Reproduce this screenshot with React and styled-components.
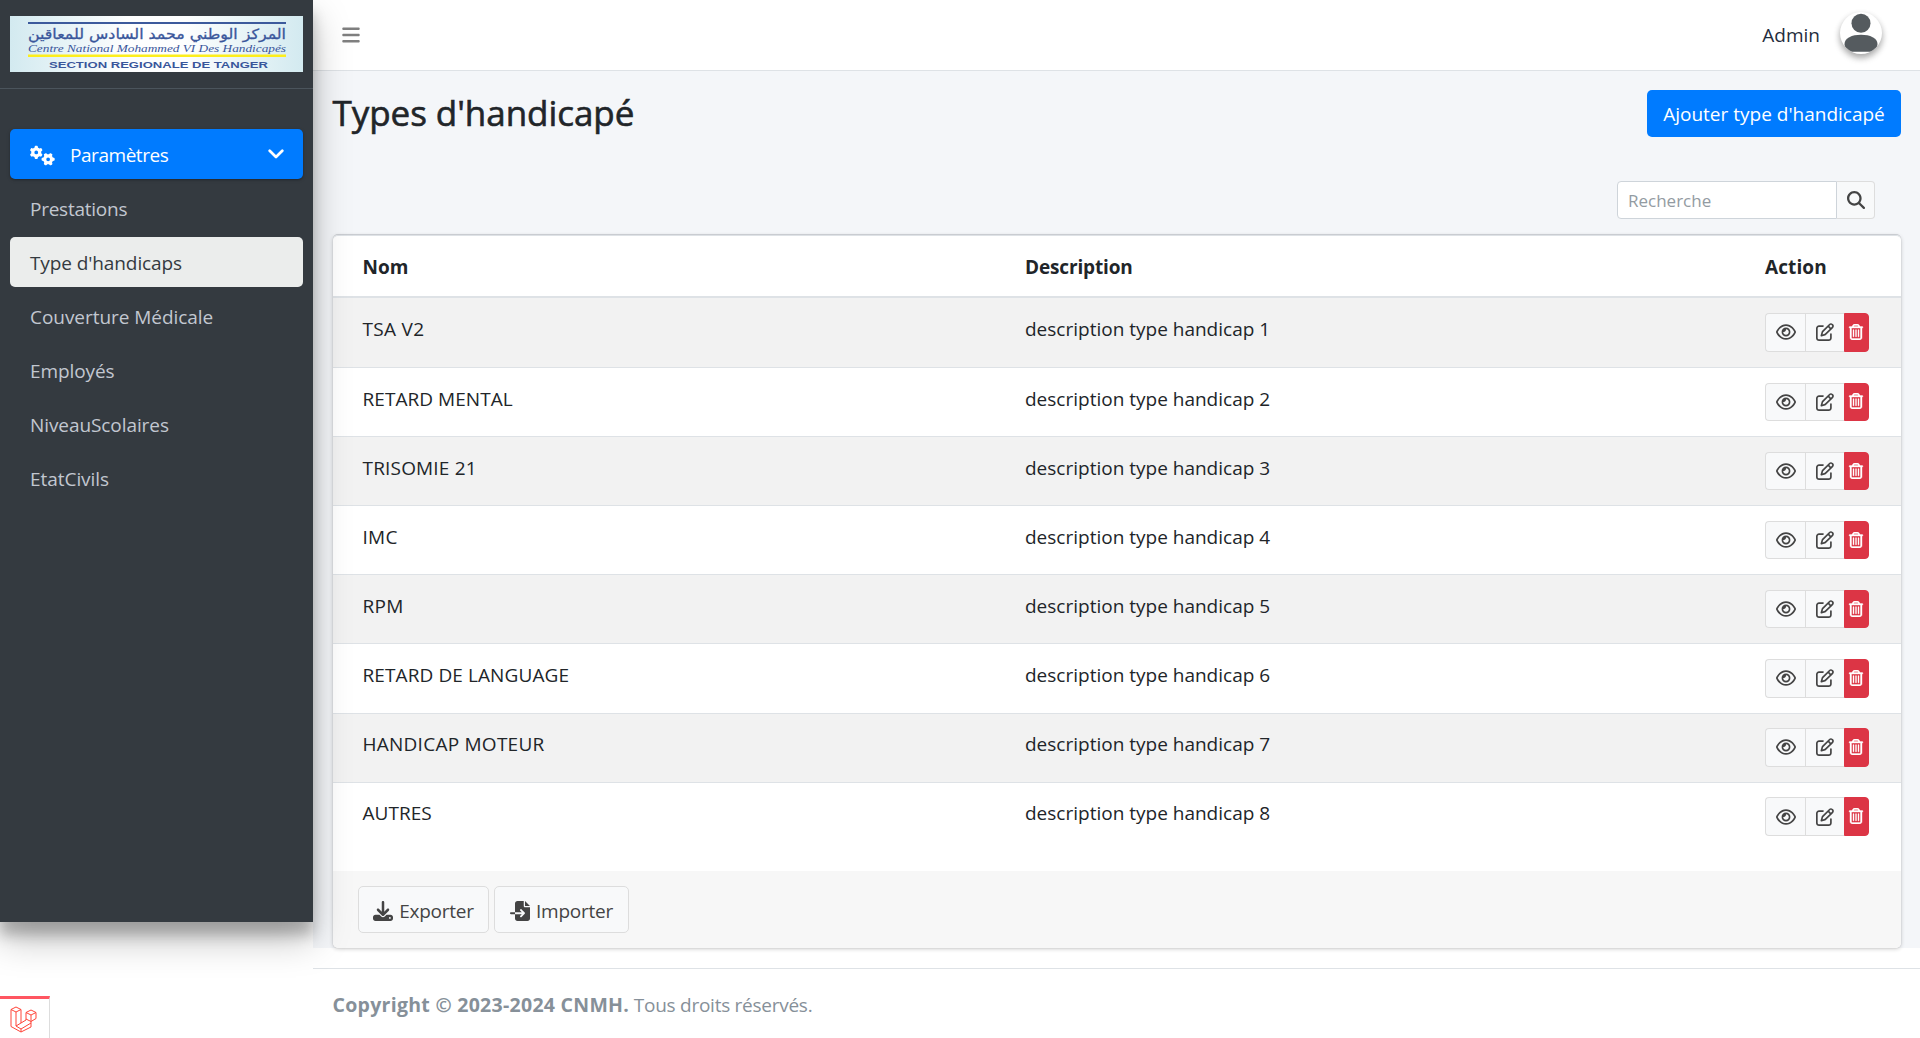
import React from "react";
import styled, { createGlobalStyle } from "styled-components";
import { FaBars, FaDownload, FaFileImport, FaGears, FaMagnifyingGlass, FaRegEye, FaRegPenToSquare, FaRegTrashCan } from "react-icons/fa6";

const GlobalStyle = createGlobalStyle`
  *, *::before, *::after { box-sizing: border-box; }
  body {
    margin: 0;
    height: 1038px;
    overflow: hidden;
    background: #fff;
    color: #212529;
    font: 400 19px/30px "Open Sans", "Noto Sans", sans-serif;
  }
  a { color: inherit; text-decoration: none; }
  button, input { font: inherit; margin: 0; }
`;

const Label = styled.span`
  letter-spacing: ${(p) => p.$track || 0}px;
`;

const Page = styled.div`
  display: flex;
  align-items: flex-start;
  height: 1038px;
`;

const Sidebar = styled.aside`
  position: relative;
  z-index: 2;
  flex: 0 0 313px;
  height: 922px;
  background: #343a40;
  box-shadow: 0 17.5px 35px rgba(0, 0, 0, 0.25), 0 12.5px 12.5px rgba(0, 0, 0, 0.22);
`;

const Brand = styled.a`
  display: block;
  height: 89px;
  padding: 16px 10px;
  border-bottom: 1px solid #4b545c;
  svg { display: block; }
`;

const Nav = styled.nav`
  display: flex;
  flex-direction: column;
  gap: 4px;
  padding: 40px 10px 0;
`;

const NavItem = styled.a`
  display: flex;
  align-items: center;
  height: 50px;
  padding: 2px 20px 0;
  border-radius: 5px;
  color: ${(p) => (p.$current ? "#343a40" : "#c2c7d0")};
  background: ${(p) => (p.$current ? "#ebedec" : "transparent")};
`;

const NavParent = styled(NavItem)`
  padding-right: 19px;
  color: #fff;
  background: #007bff;
  box-shadow: 0 1px 4px rgba(0, 0, 0, 0.12), 0 1px 2px rgba(0, 0, 0, 0.24);
  svg:first-child { margin-right: 15px; }
  svg:last-child { margin: 0 0 3px auto; }
`;

const Main = styled.div`
  flex: 1;
  min-width: 0;
`;

const Topbar = styled.header`
  display: flex;
  align-items: center;
  justify-content: space-between;
  height: 71px;
  padding: 0 38px 0 28px;
  border-bottom: 1px solid #dee2e6;
  background: #fff;
  color: #7f7f7f;
`;

const User = styled.div`
  display: flex;
  align-items: center;
  gap: 20px;
  color: #1f2d3d;
`;

const Avatar = styled.span`
  display: block;
  width: 42px;
  height: 42px;
  margin-bottom: 4px;
  border-radius: 50%;
  overflow: hidden;
  background: #fff;
  box-shadow: 0 3px 6px rgba(0, 0, 0, 0.16), 0 4px 7px rgba(0, 0, 0, 0.23);
  svg { display: block; }
`;

const Content = styled.main`
  height: 877px;
  padding: 19px 19px 0 20px;
  background: #f4f6f9;
`;

const Heading = styled.div`
  display: flex;
  justify-content: space-between;
  height: 91px;
`;

const Title = styled.h1`
  margin: 3px 0 0 -0.5px;
  font-size: 35px;
  line-height: 40px;
  font-weight: 500;
  letter-spacing: -0.05px;
  -webkit-text-stroke: 0.6px currentColor;
`;

const Primary = styled.button`
  width: 254px;
  height: 47px;
  padding: 0;
  border: 0;
  border-radius: 5px;
  background: #007bff;
  color: #fff;
`;

const Search = styled.form`
  display: flex;
  width: 258px;
  height: 38px;
  margin: 0 26px 16px auto;
`;

const SearchInput = styled.input`
  flex: 1;
  min-width: 0;
  padding: 2px 10px 0;
  border: 1px solid #ced4da;
  border-radius: 4px 0 0 4px;
  background: #fff;
  font-size: 17px;
  &::placeholder { color: #939ba2; opacity: 1; }
`;

const SearchButton = styled.button`
  display: grid;
  place-items: center;
  width: 38px;
  padding: 0;
  border: 1px solid #ddd;
  border-left: 0;
  border-radius: 0 4px 4px 0;
  background: #f8f9fa;
  color: #444;
`;

const Card = styled.section`
  display: flex;
  flex-direction: column;
  height: 713px;
  border-radius: 5px;
  background: #fff;
  box-shadow: 0 -1px 0 #c9ccd1, 0 0 1px rgba(0, 0, 0, 0.25), 0 1px 4px rgba(0, 0, 0, 0.2);
`;

const Row = styled.div`
  display: grid;
  grid-template-columns: 662.5px 740px 1fr;
  flex: none;
  height: 69.1px;
  padding: ${(p) => (p.$first ? 15 : 14.6)}px 0 0 29.5px;
  border-top: ${(p) => (p.$first ? "0" : "1px solid #dee2e6")};
  background: ${(p) => (p.$striped ? "#f2f2f2" : "#fff")};
`;

const Cell = styled(Label)`
  padding-top: 1px;
`;

const HeadRow = styled(Row)`
  height: 63px;
  padding-top: 15px;
  border-top: 1px solid #dee2e6;
  border-bottom: 2px solid #dee2e6;
  border-radius: 5px 5px 0 0;
  font-weight: 700;
`;

const Actions = styled.div`
  display: flex;
  width: 104px;
  height: 38.5px;
`;

const Action = styled.button`
  display: grid;
  place-items: center;
  width: ${(p) => p.$width}px;
  padding: 0;
  border: 1px solid ${(p) => (p.$danger ? "#dc3545" : "#ddd")};
  border-right-width: ${(p) => (p.$danger ? 1 : 0)}px;
  border-radius: ${(p) => p.$radius || 0};
  background: ${(p) => (p.$danger ? "#dc3545" : "#f8f9fa")};
  color: ${(p) => (p.$danger ? "#fff" : "#444")};
`;

const TrashIcon = styled(FaRegTrashCan)`
  margin: 0 1px 1px 0;
  stroke: currentColor;
  stroke-width: 12;
`;

const CardFooter = styled.footer`
  display: flex;
  gap: 5px;
  height: 77px;
  margin-top: auto;
  padding: 15px 25px;
  border-radius: 0 0 5px 5px;
  background: #f7f7f7;
`;

const Tool = styled.button`
  display: flex;
  align-items: center;
  justify-content: center;
  gap: 6px;
  width: ${(p) => p.$width}px;
  height: 47px;
  padding: 2px 0 0;
  border: 1px solid #ddd;
  border-radius: 5px;
  background: #f8f9fa;
  color: #444;
  letter-spacing: -0.25px;
`;

const Footer = styled.footer`
  margin-top: 20px;
  padding: 21px 19.5px;
  border-top: 1px solid #dee2e6;
  color: #869099;
  letter-spacing: -0.26px;
  strong { font-size: 19.5px; letter-spacing: 0.28px; }
`;

const DebugBadge = styled.a`
  position: fixed;
  left: 0;
  bottom: 0;
  z-index: 3;
  width: 50px;
  height: 42px;
  padding: 7px 0 0 10px;
  border-top: 3px solid #ff5661;
  border-right: 1px solid #ddd;
  background: #fff;
  svg { display: block; }
`;

const types = [
  { name: "TSA V2", track: 0.3 },
  { name: "RETARD MENTAL", track: 0.05 },
  { name: "TRISOMIE 21", track: 0.18 },
  { name: "IMC", track: 0.3 },
  { name: "RPM", track: 0.3 },
  { name: "RETARD DE LANGUAGE", track: 0.1 },
  { name: "HANDICAP MOTEUR", track: 0.25 },
  { name: "AUTRES", track: 0.05 },
];

const links = [
  { label: "Prestations", track: -0.25 },
  { label: "Type d'handicaps", track: -0.1, current: true },
  { label: "Couverture Médicale", track: -0.05 },
  { label: "Employés", track: -0.1 },
  { label: "NiveauScolaires", track: -0.08 },
  { label: "EtatCivils", track: -0.05 },
];

function BrandLogo() {
  return (
    <svg width="293" height="56" viewBox="0 0 293 56">
      <defs>
        <linearGradient id="sky" x1="0" x2="1">
          <stop offset="0" stopColor="#d3eaf0" />
          <stop offset="0.4" stopColor="#fdfefe" />
          <stop offset="0.6" stopColor="#fdfefe" />
          <stop offset="1" stopColor="#d3eaf0" />
        </linearGradient>
      </defs>
      <rect width="293" height="56" fill="url(#sky)" />
      <rect x="18" y="6" width="258" height="2" fill="#3c5a9c" />
      <rect x="18" y="38.5" width="258" height="2.5" fill="#fdee1c" />
      <g fill="#39569b">
        <text x="147" y="22.5" textAnchor="middle" direction="rtl" fontFamily="DejaVu Sans" fontSize="14" stroke="#39569b" strokeWidth="0.3" textLength="258" lengthAdjust="spacingAndGlyphs">المركز الوطني محمد السادس للمعاقين</text>
        <text x="18" y="36" fontFamily="Liberation Serif" fontStyle="italic" fontSize="11" textLength="258" lengthAdjust="spacingAndGlyphs">Centre National Mohammed VI Des Handicapés</text>
        <text x="39" y="51.5" fontFamily="Liberation Sans" fontWeight="600" fontSize="8.5" textLength="219" lengthAdjust="spacingAndGlyphs">SECTION REGIONALE DE TANGER</text>
      </g>
    </svg>
  );
}

export default function App() {
  return (
    <>
      <GlobalStyle />
      <Page>
        <Sidebar>
          <Brand href="#"><BrandLogo /></Brand>
          <Nav>
            <NavParent href="#">
              <FaGears size={25} />
              <Label $track={-0.45}>Paramètres</Label>
              <svg width="16" height="10" viewBox="0 0 16 10" fill="none" stroke="currentColor" strokeWidth="2.7" strokeLinecap="round" strokeLinejoin="round">
                <path d="M1.700 1.700 8 8l6.300-6.300" />
              </svg>
            </NavParent>
            {links.map(({ label, track, current }) => (
              <NavItem key={label} href="#" $current={current}><Label $track={track}>{label}</Label></NavItem>
            ))}
          </Nav>
        </Sidebar>
        <Main>
          <Topbar>
            <FaBars size={20} />
            <User>
              <span>Admin</span>
              <Avatar>
                <svg width="42" height="42" viewBox="0 0 42 42" fill="#555b5f">
                  <circle cx="21" cy="11.2" r="9.5" />
                  <path d="M4.500 32C4.500 26 12 22.700 21 22.700S37.500 26 37.500 32c0 3.500-2.500 6-6 7.700h-21C7 38 4.500 35.500 4.500 32z" />
                </svg>
              </Avatar>
            </User>
          </Topbar>
          <Content>
            <Heading>
              <Title>Types d'handicapé</Title>
              <Primary>Ajouter type d'handicapé</Primary>
            </Heading>
            <Search>
              <SearchInput placeholder="Recherche" />
              <SearchButton type="button"><FaMagnifyingGlass size={18} /></SearchButton>
            </Search>
            <Card>
              <HeadRow>
                <Cell>Nom</Cell>
                <Cell $track={-0.15}>Description</Cell>
                <Cell $track={0.1}>Action</Cell>
              </HeadRow>
              {types.map(({ name, track }, i) => (
                <Row key={name} $first={i === 0} $striped={i % 2 === 0}>
                  <Cell $track={track}>{name}</Cell>
                  <Cell>description type handicap {i + 1}</Cell>
                  <Actions>
                    <Action $width={40} $radius="4px 0 0 4px"><FaRegEye size={20} /></Action>
                    <Action $width={39}><FaRegPenToSquare size={18} /></Action>
                    <Action $width={25} $danger $radius="0 4px 4px 0"><TrashIcon size={16} /></Action>
                  </Actions>
                </Row>
              ))}
              <CardFooter>
                <Tool $width={131}><FaDownload size={20} /><span>Exporter</span></Tool>
                <Tool $width={135}><FaFileImport size={20} /><span>Importer</span></Tool>
              </CardFooter>
            </Card>
          </Content>
          <Footer><strong>Copyright © 2023-2024 CNMH.</strong> Tous droits réservés.</Footer>
        </Main>
      </Page>
      <DebugBadge href="#">
        <svg width="27" height="27" viewBox="0 0 27 27" fill="none" stroke="#ff4438" strokeWidth="1" strokeLinejoin="round">
          <path d="M1 3.500 6 1l5 2.500v13.500l5-3V6.500l5-2.500 5 2.500v6l-5 3v5.500L11 26 1 20.500zM1 3.500 6 6l5-2.500M6 6v14l5 3V26M6 20l5-3M11 23l10-6M16 6.500 21 9l5-2.500M21 9v6.500l-5-2.500" />
        </svg>
      </DebugBadge>
    </>
  );
}
